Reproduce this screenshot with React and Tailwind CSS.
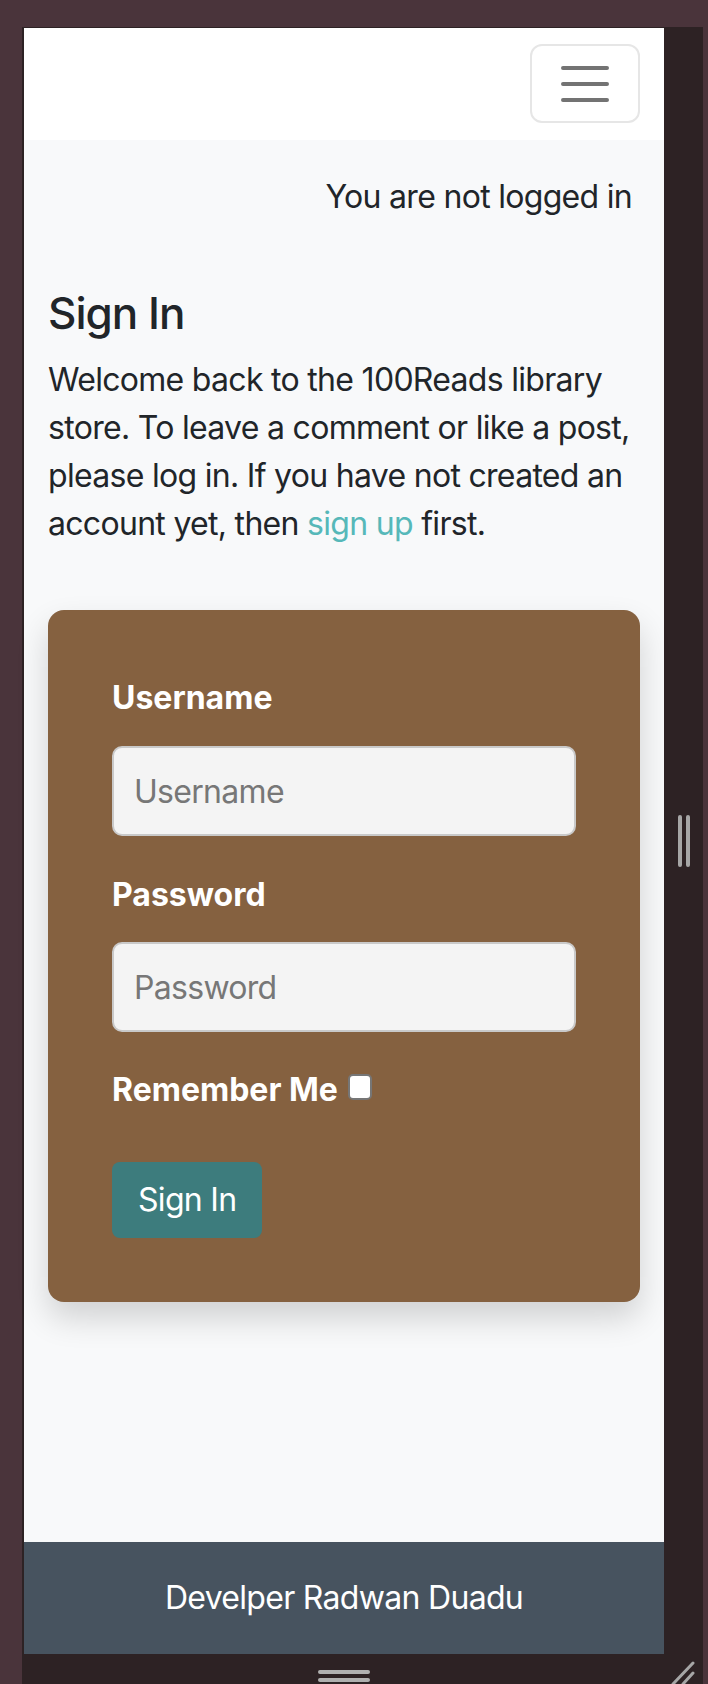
import React from 'react';

const font = { fontFamily: 'Inter, "Noto Sans", sans-serif' };

const Toggler = () => (
    <button className="w-[110px] h-[79px] rounded-[12px] border-2 border-[#e6e6e6] bg-white flex items-center justify-center">
        <svg width="60" height="60" viewBox="0 0 30 30">
            <path d="M4 7h22M4 15h22M4 23h22" stroke="#737373" strokeWidth="2" strokeLinecap="round" />
        </svg>
    </button>
);

const Field = ({ label, type, className }) => (
    <div className={className}>
        <label className="block text-[32px] leading-[48px] font-bold text-white tracking-normal">{label}</label>
        <input
            type={type}
            placeholder={label}
            className="mt-[24px] block w-full h-[90px] rounded-[10px] border-2 border-[#c9c9c9] bg-[#f4f4f4] px-[20px] text-[32px] tracking-[-0.7px] text-[#212529] placeholder:text-[#777777] outline-none"
        />
    </div>
);

const LoginCard = () => (
    <div className="mt-[62px] rounded-[16px] bg-[#856140] p-[64px] shadow-[0_16px_32px_rgba(0,0,0,0.16)]">
        <Field label="Username" type="text" />
        <Field label="Password" type="password" className="mt-[35px] [&>input]:mt-[23px]" />
        <div className="mt-[34px] flex items-center h-[48px]">
            <span className="text-[32px] font-bold text-white tracking-normal">Remember Me</span>
            <input
                type="checkbox"
                className="ml-[10px] -mt-[6px] appearance-none w-[24px] h-[26px] rounded-[5px] border-2 border-[#767676] bg-white"
            />
        </div>
        <button className="mt-[48px] h-[76px] px-[26px] rounded-[8px] bg-[#3d7c7d] text-[32px] text-white">
            Sign In
        </button>
    </div>
);

const App = () => {
    return (
        <div className="w-[708px] h-[1684px] overflow-hidden bg-[#4a343b] pt-[27px] pl-[22px] pr-[5px] tracking-[-0.7px]" style={font}>
            <div className="bg-[#2d2224] h-full flex flex-col">
                <div className="flex pt-[1px] pl-[2px]">
                    {/* emulated page */}
                    <div className="w-[640px] h-[1626px] flex flex-col text-[#212529]">
                        <nav className="h-[112px] bg-white flex justify-end items-start pt-[16px] pr-[24px]">
                            <Toggler />
                        </nav>
                        <main className="flex-1 bg-[#f8f9fa] px-[24px]">
                            <p className="mt-[33px] pr-[8px] text-right text-[32px] leading-[48px]">You are not logged in</p>
                            <h2 className="mt-[63px] text-[44px] leading-[58px] font-medium tracking-[-1px]">Sign In</h2>
                            <p className="mt-[14px] text-[32px] leading-[48px]">
                                Welcome back to the 100Reads library store. To leave a comment or like a post, please log in. If you have not created an account yet, then{' '}
                                <a className="text-[#56b8b9]">sign up</a> first.
                            </p>
                            <LoginCard />
                        </main>
                        <footer className="h-[112px] bg-[#47535f] flex items-center justify-center text-[32px] text-white">
                            Develper Radwan Duadu
                        </footer>
                    </div>
                    {/* side resize handle */}
                    <div className="flex-1 flex items-center justify-center gap-[4px]">
                        <span className="w-[4px] h-[52px] rounded-full bg-[#a6a6a6]" />
                        <span className="w-[4px] h-[52px] rounded-full bg-[#a6a6a6]" />
                    </div>
                </div>
                {/* bottom resize strip */}
                <div className="relative flex-1">
                    <div className="w-[644px] pt-[16px] flex flex-col items-center gap-[4px]">
                        <span className="w-[52px] h-[4px] rounded-full bg-[#b0b0b0]" />
                        <span className="w-[52px] h-[4px] rounded-full bg-[#b0b0b0]" />
                    </div>
                    <svg className="absolute right-[8px] bottom-0" width="24" height="24" viewBox="0 0 24 24">
                        <path d="M22 3L2 24M22 13L12 24" stroke="#a6a6a6" strokeWidth="3" strokeLinecap="round" />
                    </svg>
                </div>
            </div>
        </div>
    );
};

export default App;
